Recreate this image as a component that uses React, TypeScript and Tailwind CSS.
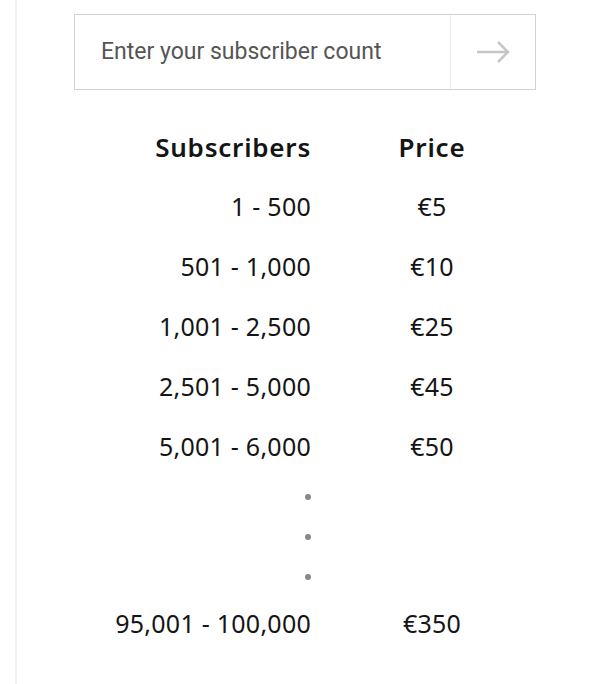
import React from "react";

const rows = [
  { range: "1 - 500", price: "€5" },
  { range: "501 - 1,000", price: "€10" },
  { range: "1,001 - 2,500", price: "€25" },
  { range: "2,501 - 5,000", price: "€45" },
  { range: "5,001 - 6,000", price: "€50" },
];

const tableFont = { fontFamily: "'Noto Sans', sans-serif" };

export default function App() {
  return (
    <div className="min-h-[684px] bg-white pl-[15px]">
      <div className="min-h-[684px] border-l-2 border-[#efefef] pl-[57px] pt-[14px]">
        {/* subscriber input */}
        <div className="flex h-[76px] w-[462px] border border-[#d2d2d2]">
          <input
            type="text"
            placeholder="Enter your subscriber count"
            className="min-w-0 flex-1 bg-transparent pl-[26px] text-[23px] text-[#555] outline-none placeholder:text-[#555]"
            style={{ fontFamily: "Roboto, sans-serif" }}
          />
          <button className="flex w-[85px] items-center justify-center border-l border-[#ececec]">
            <svg width="34" height="24" viewBox="0 0 34 24" fill="none" stroke="#c6c6c6" strokeWidth="2.5">
              <path d="M1 12h31M22 2l10 10-10 10" />
            </svg>
          </button>
        </div>

        {/* price table */}
        <div className="mt-[27px] grid grid-cols-[237px_242px] text-[25px] text-[#151515]" style={tableFont}>
          <div className="flex h-[60px] items-center justify-end text-[26px] font-semibold tracking-[0.03em]">Subscribers</div>
          <div className="flex h-[60px] items-center justify-center text-[26px] font-semibold tracking-[0.03em]">Price</div>

          {rows.map((r) => (
            <React.Fragment key={r.range}>
              <div className="flex h-[60px] items-center justify-end tracking-[0.01em]">{r.range}</div>
              <div className="flex h-[60px] items-center justify-center tracking-[0.01em]">{r.price}</div>
            </React.Fragment>
          ))}
        </div>

        {/* ellipsis dots */}
        <div className="mt-[17px] flex w-[237px] flex-col items-end gap-[34px]">
          <span className="h-[6px] w-[6px] rounded-full bg-[#888]" />
          <span className="h-[6px] w-[6px] rounded-full bg-[#888]" />
          <span className="h-[6px] w-[6px] rounded-full bg-[#888]" />
        </div>

        <div className="mt-[14px] grid grid-cols-[237px_242px] text-[25px] text-[#151515]" style={tableFont}>
          <div className="flex h-[60px] items-center justify-end tracking-[0.01em]">95,001 - 100,000</div>
          <div className="flex h-[60px] items-center justify-center tracking-[0.01em]">€350</div>
        </div>
      </div>
    </div>
  );
}
